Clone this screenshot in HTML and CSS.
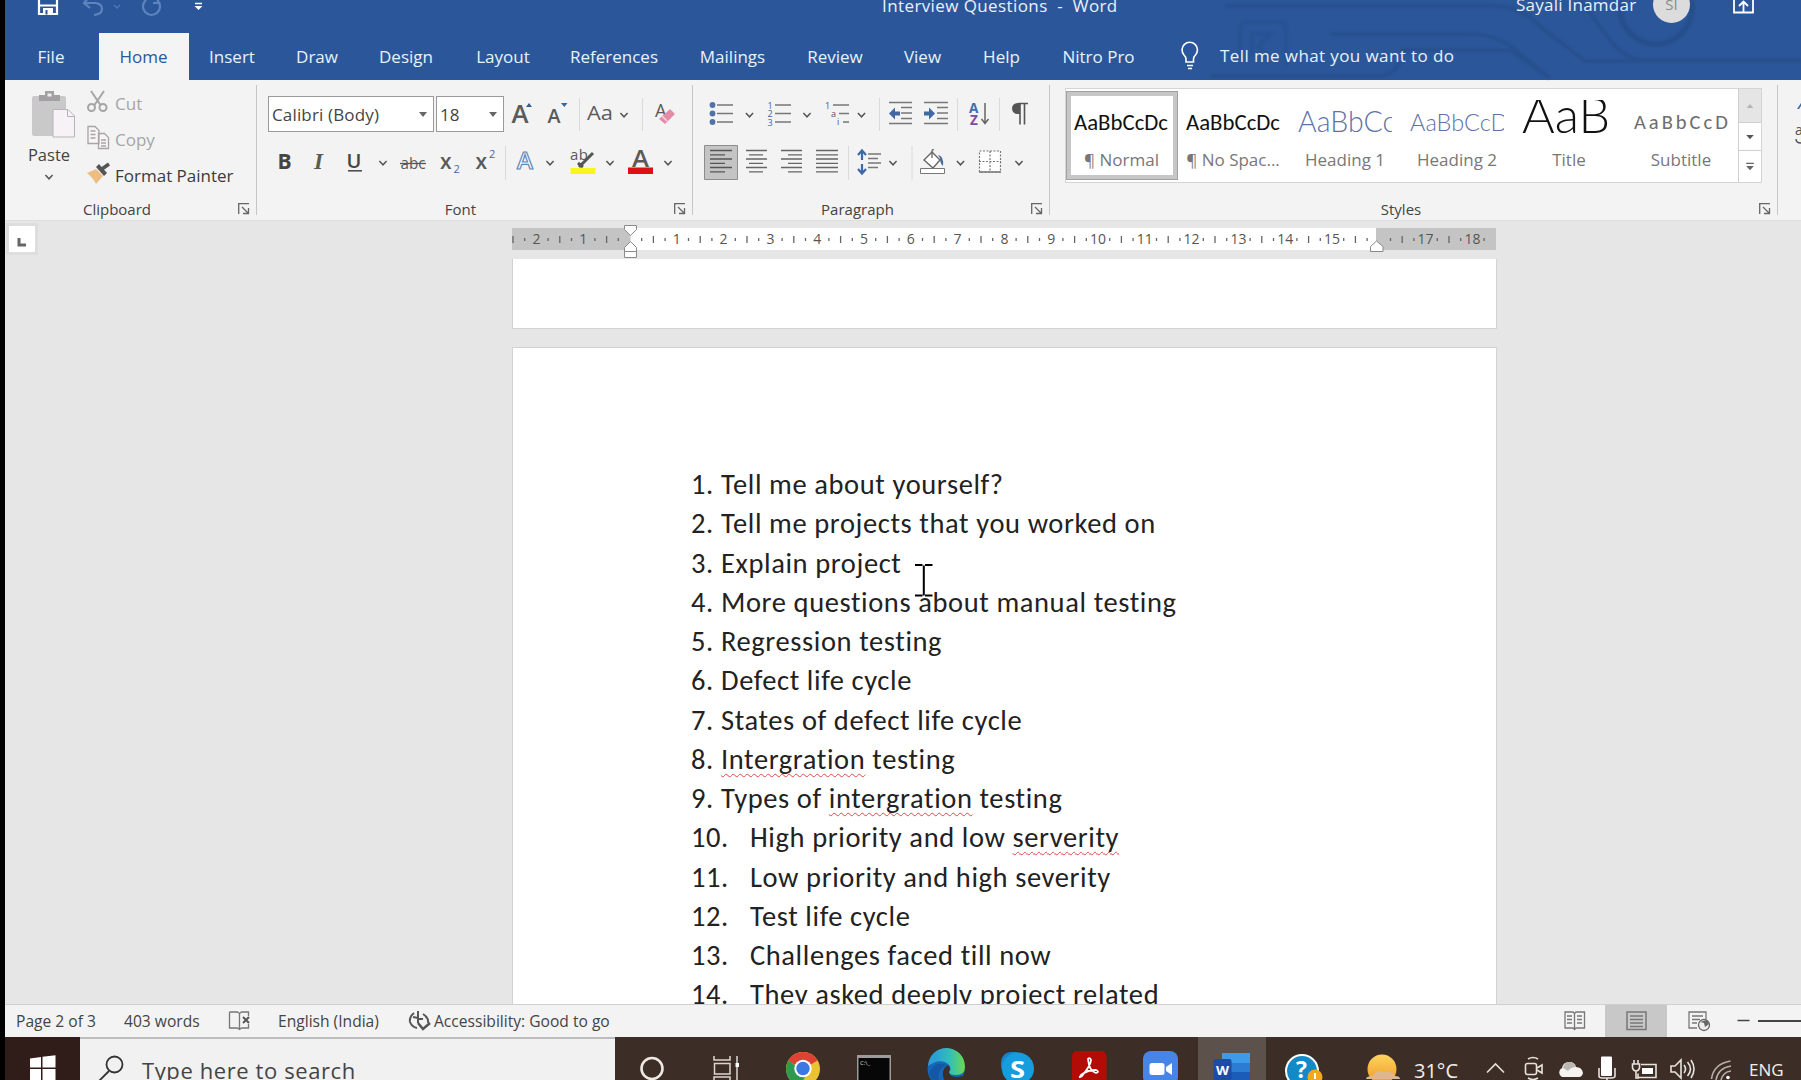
FILE: index.html
```html
<!DOCTYPE html>
<html lang="en">
<head>
<meta charset="utf-8">
<title>Interview Questions - Word</title>
<link rel="stylesheet" href="styles.css">
</head>
<body>
<svg class="defs" aria-hidden="true">
  <defs>
    <path id="chev" d="M-3.6-2L0 1.8 3.6-2" fill="none" stroke="#555" stroke-width="1.5"/>
    <path id="launch" d="M.7 11V.7H11M4 4l6 6M10.5 5v5.500H5" fill="none" stroke="#666" stroke-width="1.300"/>
    <path id="sep" d="M0 98v33" stroke="#dadada"/>
    <path id="sep2" d="M0 146v34" stroke="#dadada"/>
  </defs>
</svg>
<div class="app">
  <header class="top">
    <svg class="art" viewBox="1200 0 601 80" fill="none" stroke="#244b87">
      <path d="M1225 6h270q25 0 45 20l45 35h216M1330 34h140q30 0 50 20l30 24M1400 50h110l40 28M1580 0l30 40q15 20 35 20h156M1210 76h170q12 0 20-14" stroke-width="4" opacity=".6"/>
      <circle cx="1656" cy="8" r="36" stroke-width="6" opacity=".7"/>
      <path d="M1240 60V30q0-8 8-8h30q8 0 8 8v36M1252 54V34h18l-12 12 14 14" stroke-width="4" opacity=".4"/>
    </svg>
    <div class="titlebar">
      <svg viewBox="5 0 265 33" width="265" height="33">
        <path d="M39 0v14h18V0M39 5.500h18" fill="none" stroke="#fff" stroke-width="2.200"/>
        <path d="M43 8h10v7H43z" fill="#fff"/><path d="M45.500 10h2v4.500h-2z" fill="#2b579a"/>
        <path d="M84 3h12q6 1 6 6t-8 6M89-3l-5 6 6 5" fill="none" stroke="#5e84bd" stroke-width="2.200"/>
        <path d="M114 5l3 3 3-3" fill="none" stroke="#4d75b0" stroke-width="1.500"/>
        <path d="M146 0a8.500 8.500 0 1 0 11 0M158-2v5h-5" fill="none" stroke="#5e84bd" stroke-width="2.200"/>
        <path d="M195 3.500h7" stroke="#fff" stroke-width="1.500"/><path d="M194.500 6h8l-4 4z" fill="#fff"/>
      </svg>
      <div class="doc-title">Interview Questions&nbsp; -&nbsp; Word</div>
      <div class="user">Sayali Inamdar</div>
      <div class="avatar">SI</div>
      <svg class="share" viewBox="1725 0 40 33" width="40" height="33"><path d="M1733 0v12.500h19V0M1742.500 12V2M1738 6l4.500-4.500L1747 6" fill="none" stroke="#fff" stroke-width="1.800"/></svg>
    </div>
    <nav class="tabs">
      <span class="t-file">File</span><span class="t-home">Home</span><span class="t-insert">Insert</span><span class="t-draw">Draw</span><span class="t-design">Design</span><span class="t-layout">Layout</span><span class="t-ref">References</span><span class="t-mail">Mailings</span><span class="t-review">Review</span><span class="t-view">View</span><span class="t-help">Help</span><span class="t-nitro">Nitro Pro</span>
      <svg viewBox="1175 33 30 47" width="30" height="47" fill="none" stroke="#fff" stroke-width="1.600"><path d="M1186 62v-3q0-2-2-4a7.700 7.700 0 1 1 11.500 0q-2 2-2 4v3zM1187 65.500h6M1188 68.500h4"/></svg>
      <span class="tell">Tell me what you want to do</span>
    </nav>
  </header>

  <section class="ribbon">
    <div class="group clip">
      <div class="clip-body">
        <div class="paste">
          <svg viewBox="20 86 58 58" width="58" height="58">
            <rect x="32" y="96" width="34" height="40" rx="2" fill="#c9c9c9"/><path d="M39 95h6v-4h9v4h6v6H39z" fill="#a2a0a2"/><path d="M47.500 93.500h4v3h-4z" fill="#eee"/>
            <path d="M53 109.500h15l6.500 6.500v21H53z" fill="#f7f2f6" stroke="#b9b2b8"/><path d="M67.500 110v6.500H74" fill="none" stroke="#b9b2b8"/>
          </svg>
          <span>Paste</span>
          <svg viewBox="39 168 20 16" width="20" height="16"><use href="#chev" x="49" y="177"/></svg>
        </div>
        <div class="clip-list">
          <div class="cmd off"><svg viewBox="84 86 32 36" width="32" height="36" fill="none" stroke="#a5a5a5" stroke-width="2"><path d="M91 91l9.500 14M104 91l-9.500 14"/><circle cx="91.500" cy="107.500" r="3.500"/><circle cx="103" cy="107.500" r="3.500"/></svg><span class="c-cut">Cut</span></div>
          <div class="cmd off"><svg viewBox="84 122 32 36" width="32" height="36" fill="#f6f4f5" stroke="#a9a4a7" stroke-width="1.300"><path d="M88 126.500h7l4 4v13H88zM98.500 133.500h6l4 4v11h-10z"/><path d="M90.500 131h5M90.500 134.500h5M90.500 138h5M101 140h5M101 143h5M101 146h5"/></svg><span class="c-copy">Copy</span></div>
          <div class="cmd"><svg viewBox="84 158 32 36" width="32" height="36"><path d="M87 173l9-4 7 7-7 8q-2-5-9-11z" fill="#edbd82"/><path d="M96 167l3-3 8 9-3 3z" fill="#555"/><path d="M102 169l7-5" stroke="#555" stroke-width="3.500"/></svg><span class="c-format">Format Painter</span></div>
        </div>
      </div>
      <div class="foot"><span>Clipboard</span></div>
      <svg class="launcher" viewBox="0 0 12 12"><use href="#launch"/></svg>
    </div>

    <div class="group font">
      <div class="row r1">
        <div class="combo name"><span>Calibri (Body)</span><i></i></div>
        <div class="combo size"><span>18</span><i></i></div>
        <svg viewBox="504 92 36 44"><text x="511.500" y="122.500" font-size="25" font-weight="600" textLength="17" lengthAdjust="spacingAndGlyphs" class="gl">A</text><path d="M526 107l3-4 3 4z" fill="#3c5a86"/></svg>
        <svg viewBox="540 92 35 44"><text x="547.500" y="122.500" font-size="20" font-weight="600" textLength="13" lengthAdjust="spacingAndGlyphs" class="gl">A</text><path d="M561 103h6.500l-3.200 4z" fill="#2b6aa8"/></svg>
        <svg viewBox="575 92 10 44"><use href="#sep" x="579.500"/></svg>
        <svg viewBox="585 92 50 44"><text x="587" y="119.500" font-size="20.500" textLength="26" lengthAdjust="spacingAndGlyphs" class="gl">Aa</text><use href="#chev" x="624" y="115"/></svg>
        <svg viewBox="635 92 12 44"><use href="#sep" x="642.500"/></svg>
        <svg viewBox="647 92 42 44"><text x="655" y="117" font-size="18" class="gl">A</text><path d="M659 119l11-10 5 5-10 10z" fill="#e58ba6"/><path d="M662 116l5 5" stroke="#f8d6e0" stroke-width="1.500"/></svg>
      </div>
      <div class="row r2">
        <svg viewBox="268 136 32 48"><text x="277.500" y="168.500" font-size="21" font-weight="700" class="gl dk">B</text></svg>
        <svg viewBox="300 136 37 48"><text x="314" y="168.500" font-size="23" font-weight="700" font-style="italic" class="gl serif">I</text></svg>
        <svg viewBox="337 136 58 48"><text x="346.500" y="167.500" font-size="20" font-weight="600" class="gl dk">U</text><path d="M348 170.800h14" stroke="#444" stroke-width="1.500"/><use href="#chev" x="383" y="163"/></svg>
        <svg viewBox="395 136 37 48"><text x="400.500" y="169" font-size="17" class="gl" textLength="25" lengthAdjust="spacingAndGlyphs">abc</text><path d="M400 163.500h26" stroke="#555" stroke-width="1.300"/></svg>
        <svg viewBox="432 136 36 48"><text x="440" y="168.500" font-size="21" font-weight="600" class="gl">x</text><text x="453.500" y="172.500" font-size="11" class="gl bl">2</text></svg>
        <svg viewBox="468 136 32 48"><text x="475.500" y="168.500" font-size="21" font-weight="600" class="gl">x</text><text x="489" y="158" font-size="11" class="gl bl">2</text></svg>
        <svg viewBox="500 136 10 48"><use href="#sep2" x="505.500"/></svg>
        <svg viewBox="510 136 52 48"><text x="517" y="169" font-size="24" font-weight="600" fill="#f8fbff" stroke="#5f86bb" stroke-width="1.200">A</text><use href="#chev" x="550" y="163"/></svg>
        <svg viewBox="562 136 60 48"><text x="570" y="160" font-size="15" class="gl" textLength="18">ab</text><path d="M593 153l-14 14M578 163l5 4" stroke="#555" stroke-width="3"/><path d="M570.500 168h25v6h-25z" fill="#f8f71c"/><use href="#chev" x="610" y="163"/></svg>
        <svg viewBox="622 136 60 48"><text x="632" y="166.500" font-size="23" font-weight="600" textLength="17" lengthAdjust="spacingAndGlyphs" class="gl">A</text><path d="M628 167.500h25v6.500h-25z" fill="#dc1118"/><use href="#chev" x="668" y="163"/></svg>
      </div>
      <div class="foot"><span>Font</span></div>
      <svg class="launcher" viewBox="0 0 12 12"><use href="#launch"/></svg>
    </div>

    <div class="group para">
      <div class="row r1">
        <svg viewBox="704 92 56 44"><path d="M717 105h16M717 113.500h16M717 122h16" stroke="#777" stroke-width="1.500"/><g fill="#4f72a8"><circle cx="712.500" cy="105" r="2.900"/><circle cx="712.500" cy="113.500" r="2.900"/><circle cx="712.500" cy="122" r="2.900"/></g><use href="#chev" x="749.500" y="115"/></svg>
        <svg viewBox="760 92 58 44"><path d="M775 105h16M775 113.500h16M775 122h16" stroke="#777" stroke-width="1.500"/><g font-size="9" class="bl"><text x="767.500" y="108.500">1</text><text x="767.500" y="117">2</text><text x="767.500" y="125.500">3</text></g><use href="#chev" x="807" y="115"/></svg>
        <svg viewBox="818 92 56 44"><path d="M833 105h16M839 113.500h10M843 122h6" stroke="#777" stroke-width="1.500"/><g font-size="9" fill="#555"><text x="825" y="109">1</text><text x="831" y="117">a</text><text x="837" y="125">i</text></g><use href="#chev" x="861.500" y="115"/></svg>
        <svg viewBox="874 92 10 44"><use href="#sep" x="879.500"/></svg>
        <svg viewBox="884 92 34 44"><path d="M889 102.500h23M901 107.500h11M901 113h11M901 118.500h11M889 123.500h23" stroke="#777" stroke-width="1.500"/><path d="M889 113.500l6-6v4h5v4h-5v4z" fill="#4069a4"/></svg>
        <svg viewBox="918 92 34 44"><path d="M924 102.500h24M937 107.500h11M937 113h11M937 118.500h11M924 123.500h24" stroke="#777" stroke-width="1.500"/><path d="M935 113.500l-6-6v4h-5v4h5v4z" fill="#4069a4"/></svg>
        <svg viewBox="952 92 10 44"><use href="#sep" x="957.500"/></svg>
        <svg viewBox="962 92 34 44"><text x="969" y="112.500" font-size="13.500" font-weight="700" fill="#3f6db0">A</text><text x="970" y="125" font-size="13.500" font-weight="700" fill="#7d4aa8">Z</text><path d="M985 103v20M981.500 119l3.500 4.500 3.500-4.500" fill="none" stroke="#666" stroke-width="1.500"/></svg>
        <svg viewBox="996 92 8 44"><use href="#sep" x="999.500"/></svg>
        <svg viewBox="1004 92 40 44"><path d="M1018.500 103.500h9.500M1020 103.500v21M1024.500 103.500v21" stroke="#555" stroke-width="1.600"/><path d="M1020 103v11h-2.500a5.500 5.500 0 0 1 0-11z" fill="#555"/></svg>
      </div>
      <div class="row r2">
        <svg viewBox="704 136 35 48"><path d="M704.500 145.500h33v34h-33z" fill="#c4c4c4" stroke="#8d8d8d"/><path d="M710 150.500h22M710 154.800h15M710 159h22M710 163.300h15M710 167.500h22M710 171.800h15" stroke="#555" stroke-width="1.300"/></svg>
        <svg viewBox="739 136 35 48"><path d="M746 150.500h21M749 154.800h14M746 159h21M749 163.300h14M746 167.500h21M749 171.800h14" stroke="#666" stroke-width="1.300"/></svg>
        <svg viewBox="774 136 35 48"><path d="M781 150.500h21M788 154.800h14M781 159h21M788 163.300h14M781 167.500h21M788 171.800h14" stroke="#666" stroke-width="1.300"/></svg>
        <svg viewBox="809 136 35 48"><path d="M816 150.500h22M816 154.800h22M816 159h22M816 163.300h22M816 167.500h22M816 171.800h22" stroke="#666" stroke-width="1.300"/></svg>
        <svg viewBox="844 136 8 48"><use href="#sep2" x="848.500"/></svg>
        <svg viewBox="852 136 55 48"><path d="M862 152v8M862 164v8M858 155l4-4.500 4 4.500M858 169l4 4.500 4-4.500" fill="none" stroke="#4069a4" stroke-width="2.200"/><path d="M868 154h13M868 158.500h10M868 163h13M868 167.500h10" stroke="#777" stroke-width="1.300"/><use href="#chev" x="893" y="163"/></svg>
        <svg viewBox="907 136 8 48"><use href="#sep2" x="912"/></svg>
        <svg viewBox="915 136 58 48"><path d="M924 160l8-8 8 8-7 8z" fill="#fff" stroke="#666" stroke-width="1.400"/><path d="M932 158v-7q0-2 2-1" fill="none" stroke="#666" stroke-width="1.300"/><path d="M938 155q6 1 5 11-3-3-3-8z" fill="#46699c"/><path d="M920.500 168.500h24v5h-24z" fill="#fff" stroke="#777"/><use href="#chev" x="960.500" y="163"/></svg>
        <svg viewBox="973 136 60 48"><path d="M979.500 151h21v21h-21zM990 151v21M979 161.500h22" fill="#fff" stroke="#777" stroke-width="1.200" stroke-dasharray="2 1.500"/><path d="M979 172h22" stroke="#777" stroke-width="1.500"/><use href="#chev" x="1019" y="163"/></svg>
      </div>
      <div class="foot"><span>Paragraph</span></div>
      <svg class="launcher" viewBox="0 0 12 12"><use href="#launch"/></svg>
    </div>

    <div class="group styles">
      <div class="gallery">
        <div class="style sel"><b class="s-normal">AaBbCcDc</b><span>¶ Normal</span></div>
        <div class="style"><b class="s-normal">AaBbCcDc</b><span>¶ No Spac...</span></div>
        <div class="style"><b class="s-h1">AaBbCc</b><span>Heading 1</span></div>
        <div class="style"><b class="s-h2">AaBbCcD</b><span>Heading 2</span></div>
        <div class="style"><b class="s-title">AaB</b><span>Title</span></div>
        <div class="style"><b class="s-sub">AaBbCcD</b><span>Subtitle</span></div>
        <div class="scroll">
          <svg class="up" viewBox="0 0 23 33"><path d="M8 19h7l-3.500-4z" fill="#b5b5b5"/></svg>
          <svg class="down" viewBox="0 0 23 29"><path d="M7.500 13h8l-4 4.500z" fill="#555"/></svg>
          <svg class="more" viewBox="0 0 23 30"><path d="M7.500 11h8v1.500h-8zM7.500 14.500h8l-4 4.500z" fill="#666"/></svg>
        </div>
      </div>
      <div class="foot"><span>Styles</span></div>
      <svg class="launcher" viewBox="0 0 12 12"><use href="#launch"/></svg>
    </div>
    <div class="group rest"><svg viewBox="1778 92 23 60" width="23" height="60"><path d="M1797 109l4-6v3l-2 3z" fill="#4069a4"/><text x="1795" y="135" font-size="14" fill="#555">a</text><path d="M1796 139q0 4 5 4" fill="none" stroke="#555" stroke-width="1.500"/></svg></div>
  </section>

  <main class="canvas">
    <div class="ruler-row">
      <div class="tabsel"><svg viewBox="0 0 26 26" width="26" height="26"><path d="M10 12v7h7" fill="none" stroke="#666" stroke-width="3"/></svg></div>
      <svg class="ruler" id="ruler" viewBox="512 221 984 38" width="984" height="38">
        <path d="M512 228h984v22H512z" fill="#c4c4c4"/><path d="M630.500 228H1376v22H630.500z" fill="#fff"/>
        <g id="marks"></g>
        <g fill="#fff" stroke="#8a8a8a"><path d="M624.500 225.500h12v4l-6 6-6-6zM624.500 251.500v-4l6-6 6 6v4zM624.500 251.500h12v6h-12zM1370.500 251.500v-5l6-5.500 6.500 5.500v5z"/></g>
      </svg>
    </div>
    <div class="page prev"></div>
    <div class="page cur">
      <ol>
        <li><i>1.</i>Tell me about yourself?</li>
        <li><i>2.</i>Tell me projects that you worked on</li>
        <li><i>3.</i>Explain project</li>
        <li><i>4.</i>More questions about manual testing</li>
        <li><i>5.</i>Regression testing</li>
        <li><i>6.</i>Defect life cycle</li>
        <li><i>7.</i>States of defect life cycle</li>
        <li><i>8.</i><u>Intergration</u> testing</li>
        <li><i>9.</i>Types of <u>intergration</u> testing</li>
        <li class="wide"><i>10.</i>High priority and low <u>serverity</u></li>
        <li class="wide"><i>11.</i>Low priority and high severity</li>
        <li class="wide"><i>12.</i>Test life cycle</li>
        <li class="wide"><i>13.</i>Challenges faced till now</li>
        <li class="wide"><i>14.</i>They asked deeply project related</li>
      </ol>
      <svg class="ibeam" viewBox="0 0 18 33" width="18" height="33"><path d="M0 1h7.500M10 1h7.500M8.800 1.500v30M0 31.500h7.500M10 31.500h7.500" stroke="#000" stroke-width="2"/></svg>
    </div>
  </main>

  <div class="status">
    <span class="st-page">Page 2 of 3</span><span class="st-words">403 words</span>
    <svg viewBox="222 1005 50 32" width="50" height="32" fill="none" stroke="#777" stroke-width="1.300"><path d="M229.500 1012h8l2 1.500 2-1.500h7v4M239.500 1013v16M229.500 1012v16h8l2 1.500 2-1.500h7v-4"/><path d="M243 1017l6 6M249 1017l-6 6" stroke="#555" stroke-width="2"/></svg>
    <span class="st-lang">English (India)</span>
    <svg viewBox="403 1005 30 32" width="30" height="32" fill="none" stroke="#555" stroke-width="2"><path d="M414 1013q-5 4-4 9 2 5 7 6M423 1014q6 4 5 9M418 1011v12M413 1017l10 2"/><path d="M418 1023l5 6 7-6" stroke-width="2.500"/></svg>
    <span class="st-acc">Accessibility: Good to go</span>
    <svg viewBox="1550 1005 55 32" width="55" height="32" fill="none" stroke="#777" stroke-width="1.300"><path d="M1565 1012h8l1.500 1.500 1.500-1.500h8.500v16h-8.500l-1.500 1.500-1.500-1.500h-8zM1574.500 1013v16M1567 1016h5M1567 1019.500h5M1567 1023h5M1577 1016h5M1577 1019.500h5M1577 1023h5"/></svg>
    <svg class="on" viewBox="1605 1005 62 32" width="62" height="32" fill="none" stroke="#777" stroke-width="1.500"><path d="M1627 1012h19v17.500h-19zM1630 1016h13M1630 1019.500h13M1630 1023h13M1630 1026.500h13"/></svg>
    <svg viewBox="1667 1005 134 32" width="134" height="32" fill="none" stroke="#777" stroke-width="1.300"><path d="M1697 1028h-8v-16h17v7M1692 1016h11M1692 1019.500h8M1692 1023h5"/><circle cx="1704" cy="1025" r="5.500" fill="#eee" stroke="#666"/><path d="M1700 1022l4 1 1 4 4-3-2-4z" fill="#666" stroke="none"/><path d="M1737.500 1020.500h12" stroke="#444" stroke-width="1.500"/><path d="M1758 1021h43" stroke="#444" stroke-width="2"/></svg>
  </div>

  <footer class="taskbar">
    <div class="start"><svg viewBox="5 1037 75 43" width="75" height="43"><path d="M30 1058.500l11-1.500v10.500H30zM42.500 1056.800l13-1.500v12.200h-13zM30 1069h11v11H30zM42.500 1069h13v11h-13z" fill="#fff"/></svg></div>
    <div class="search"><svg viewBox="80 1039 62 41" width="62" height="41" fill="none" stroke="#333" stroke-width="1.800"><circle cx="114.500" cy="1064.500" r="8"/><path d="M109 1071l-10 10"/></svg><span>Type here to search</span></div>
    <svg viewBox="615 1037 75 43" width="75" height="43"><ellipse cx="652" cy="1068.500" rx="10.500" ry="10.500" fill="none" stroke="#eee8e2" stroke-width="2.600"/></svg>
    <svg viewBox="690 1037 75 43" width="75" height="43" fill="none" stroke="#ddd6cf" stroke-width="1.500"><path d="M714 1056v4h16v-4M714.500 1063.500h15.500v10.500h-15.500zM714 1080v-3h16v3M737 1056v24"/><path d="M735.500 1063h3.500v4h-3.500z" fill="#fff" stroke="none"/></svg>
    <svg viewBox="765 1037 75 43" width="75" height="43"><circle cx="803" cy="1069" r="17" fill="#eac333"/><path d="M803 1069L788.300 1060.500a17 17 0 0 1 29.400 0z" fill="#dd4335"/><path d="M817.700 1060.500H803l-9 4-5.700-4z" fill="#dd4335"/><path d="M788.300 1060.500A17 17 0 0 0 800 1085.700l7-12z" fill="#2d9a50"/><circle cx="803" cy="1068.500" r="8.700" fill="#fff"/><circle cx="803" cy="1068.500" r="6.700" fill="#3b78e0"/></svg>
    <svg viewBox="840 1037 70 43" width="70" height="43"><path d="M857 1055h34v25h-34z" fill="#9b9b9b"/><path d="M858.500 1058h31v22h-31z" fill="#070707"/><text x="860" y="1065" font-size="6" fill="#ddd">C:\_</text></svg>
    <svg viewBox="910 1037 72 43" width="72" height="43"><defs><linearGradient id="eg"><stop offset=".2" stop-color="#2a9fd8"/><stop offset=".6" stop-color="#35bfb7"/><stop offset="1" stop-color="#69d94e"/></linearGradient></defs><circle cx="946" cy="1069" r="18.500" fill="#1766b8"/><path d="M928 1066a18.500 18.500 0 0 1 37 1q0 8-9 8-7 0-7-3 3-3 0-7-8-8-21 1z" fill="url(#eg)"/><path d="M944 1080q-4-10 4-15 3 3 1 7 0 5 9 5l8-2v5z" fill="#3c3026"/><path d="M929 1074q5-14 17-9-9 4-7 15h-6z" fill="#1258a6"/></svg>
    <svg viewBox="982 1037 72 43" width="72" height="43"><rect x="1001" y="1052" width="24" height="24" rx="10" fill="#1686cc"/><circle cx="1018" cy="1068.500" r="16" fill="#159ddd"/><text x="1010" y="1078" font-size="24" font-weight="700" fill="#fff" textLength="15" lengthAdjust="spacingAndGlyphs">S</text></svg>
    <svg viewBox="1054 1037 72 43" width="72" height="43"><rect x="1072" y="1051" width="34.500" height="34" rx="5" fill="#b30c07"/><path d="M1088 1059q2-2 3 1 0 5-9 16-4 3-1-1 6-5 15-5 4 2 0 3-7-2-8-14z" fill="none" stroke="#fff" stroke-width="1.800"/></svg>
    <svg viewBox="1126 1037 72 43" width="72" height="43"><rect x="1143" y="1051" width="35" height="34" rx="8" fill="#4784e8"/><rect x="1149.500" y="1063" width="15" height="12" rx="2.500" fill="#fff"/><path d="M1166 1067l6-4v12l-6-4z" fill="#fff"/></svg>
    <svg class="active" viewBox="1198 1037 68 43" width="68" height="43"><path d="M1222 1053h28v10h-28z" fill="#3f9be8"/><path d="M1222 1063h28v9h-28z" fill="#2b7cd3"/><path d="M1222 1072h28v8h-28z" fill="#1b5cb8"/><rect x="1213.500" y="1059" width="18" height="21" rx="2" fill="#1c4ca5"/><text x="1216" y="1074.500" font-size="12" font-weight="700" fill="#fff" textLength="13" lengthAdjust="spacingAndGlyphs">W</text></svg>
    <svg viewBox="1266 1037 84 43" width="84" height="43"><circle cx="1302" cy="1071" r="16" fill="#1489c8" stroke="#fff" stroke-width="2"/><text x="1296" y="1078" font-size="23" font-weight="700" fill="#fff">?</text><circle cx="1315" cy="1077" r="7.500" fill="#f0a81c"/><path d="M1314 1073h2v6h-2z" fill="#fff"/></svg>
    <svg viewBox="1350 1037 60 43" width="60" height="43"><defs><linearGradient id="sun" x2="0" y2="1"><stop stop-color="#fdd35d"/><stop offset="1" stop-color="#f09a2a"/></linearGradient></defs><circle cx="1382" cy="1069" r="14.500" fill="url(#sun)"/><path d="M1366 1079q0-3 7-3 4-7 11-4 8-1 11 4 5 0 5 3z" fill="#dfb693"/></svg>
    <span class="temp">31°C</span>
    <svg viewBox="1465 1037 280 43" width="280" height="43" fill="none" stroke="#e8e2dc" stroke-width="1.600">
      <path d="M1487 1072.500l8.500-8.500 8.500 8.500"/>
      <rect x="1525.500" y="1063.500" width="11" height="11" rx="2"/><path d="M1537 1068l5-3v8l-5-3M1528 1059q5-3 10 0M1528 1078q5 3 10 0"/>
      <path d="M1562 1077a5 5 0 0 1 0-9q1-6 7-6 6 0 7 5 6 0 7 6-1 4-4 4z" fill="#f5f2ef" stroke="none"/><path d="M1563 1068q1-6 6-6 5 0 7 5-5 0-8 4z" fill="#bdb7b2" stroke="none"/>
      <rect x="1601" y="1056.500" width="11" height="19.500" rx="1" fill="#fff" stroke="none"/><path d="M1599 1068v8q0 2 3 2h9q4 0 4-2v-8M1607 1078v2"/>
      <path d="M1641 1064.500h15v13h-18v-4M1632.500 1064h7v4q-1 3-3.500 3t-3.500-3zM1634 1060v4M1638 1060v4M1636 1071v7h3"/><path d="M1642 1068h11v6h-11z" fill="#fff" stroke="none"/>
      <path d="M1671 1066h4l6-6v18l-6-6h-4zM1684 1065q3 4 0 8M1687.500 1062q6 7 0 14M1691 1060q6 9 0 18"/>
      <path d="M1711.500 1079q2-15 19-18M1716 1080q2-12 15-14M1721 1080q2-8 10-9" stroke="#b6afa8"/><circle cx="1728" cy="1077.500" r="1.800" fill="#fff" stroke="none"/>
    </svg>
    <span class="eng">ENG</span>
  </footer>
</div>
<script src="ruler.js"></script>
</body>
</html>
```
FILE: styles.css
```css
* { box-sizing: border-box; }
body { margin: 0; background: #000; overflow: hidden; font-family: "Open Sans", "Noto Sans", sans-serif; color: #444; }
svg { display: block; flex: none; }
.defs { position: absolute; width: 0; height: 0; }
.app { height: 1080px; padding-left: 5px; display: flex; flex-direction: column; overflow: hidden; }

/* Title bar and tabs */
.top { position: relative; height: 80px; flex: none; background: #2b579a; color: #e9f1fb; }
.art { position: absolute; right: 0; top: 0; width: 601px; height: 80px; filter: blur(1px); }
.titlebar, .tabs { position: relative; display: flex; white-space: nowrap; }
.titlebar { height: 33px; font-size: 17px; line-height: 24px; overflow: hidden; }
.titlebar > * { flex: none; }
.doc-title { margin-left: 612px; margin-top: -6px; width: 634px; letter-spacing: .4px; }
.user { width: 137px; margin-top: -7px; letter-spacing: .25px; }
.avatar { width: 37px; height: 37px; margin-top: -14px; border-radius: 50%; background: #dcdcdc; color: #8b8b8b; font-size: 15px; line-height: 37px; text-align: center; }
.share { margin-left: 36px; }
.tabs { height: 47px; font-size: 17px; line-height: 47px; }
.tabs span { flex: none; text-align: center; }
.tabs .t-file { width: 94px; padding-right: 2px; }
.tabs .t-home { width: 90px; padding-right: 1px; background: #f4f4f5; color: #2b579a; }
.t-insert { width: 86px; }
.t-draw { width: 84px; }
.t-design { width: 94px; }
.t-layout { width: 100px; }
.t-ref { width: 122px; }
.t-mail { width: 115px; }
.t-review { width: 90px; }
.t-view { width: 85px; }
.t-help { width: 73px; }
.t-nitro { width: 137px; padding-right: 16px; }
.tabs .tell { margin-left: 15px; line-height: 45px; letter-spacing: .4px; }

/* Ribbon */
.ribbon { display: flex; flex: none; height: 141px; background: #f3f3f3; border-bottom: 1px solid #dedede; }
.group { position: relative; flex: none; height: 140px; padding-top: 12px; }
.group::after { content: ""; position: absolute; right: 0; top: 5px; width: 1px; height: 130px; background: #c6c6c6; }
.clip { width: 252px; padding-top: 6px; }
.font { width: 436px; padding-left: 11px; }
.para { width: 357px; padding-left: 11px; }
.styles { width: 728px; padding: 8px 16px 0 15px; }
.rest { width: 23px; }
.rest::after { display: none; }
.row { display: flex; align-items: center; }
.r1 > svg, .r1 { height: 44px; }
.r2 > svg, .r2 { height: 48px; }
.gl { fill: #5a5a5a; }
.dk { fill: #444; }
.bl { fill: #3f67a5; }
.serif { font-family: "Liberation Serif", serif; }
.foot { height: 37px; padding-top: 13px; font-size: 15px; line-height: 24px; text-align: center; }
.clip .foot { padding-top: 1px; padding-right: 28px; }
.font .foot { padding-right: 40px; }
.para .foot { padding-right: 39px; }
.styles .foot { padding-top: 14px; padding-right: 25px; }
.launcher { position: absolute; right: 7px; bottom: 5px; width: 12px; height: 12px; }
.clip-body { display: flex; height: 110px; }
.paste { width: 79px; display: flex; flex-direction: column; align-items: center; font-size: 16.500px; line-height: 21px; padding-left: 9px; }
.paste span { height: 24px; }
.cmd { display: flex; height: 36px; align-items: center; font-size: 17px; line-height: 34px; color: #3b3b3b; }
.cmd span { padding-bottom: 1px; margin-left: -1px; }
.off { color: #a6a6a6; }
.combo { display: flex; flex: none; height: 36px; align-items: center; justify-content: space-between; background: #fff; border: 1px solid #9a9a9a; padding: 1px 6px 0 3px; font-size: 17px; }
.combo i { border: 4px solid transparent; border-top: 5px solid #666; border-bottom: 0; }
.name { width: 166px; margin-right: 2px; }
.name span { letter-spacing: .15px; }
.size { width: 68px; }

/* Style gallery */
.gallery { display: flex; width: 697px; height: 95px; background: #fff; border: 1px solid #d4d4d4; }
.style { width: 112px; padding: 0 10px 0 8px; flex: none; font-size: 17px; text-align: center; color: #777; white-space: nowrap; }
.style b { display: block; height: 40px; margin-top: 11px; overflow: hidden; font-weight: 300; text-align: left; font-family: Lato, sans-serif; }
.style span { display: block; margin: 9px -8px 0 -8px; line-height: 22px; }
.style.sel { height: 89px; margin-top: 2px; border: 5px solid #c6c6c6; outline: 1px solid #a2a2a2; outline-offset: -1px; padding: 0 4px 0 3px; }
.style.sel b { margin-top: 4px; }
.style .s-normal { color: #111; font: 400 22.800px/45px Carlito, Lato, sans-serif; }
.style .s-h1 { color: #5f72a8; font-size: 28.500px; line-height: 43px; }
.style .s-h2 { color: #5f72a8; font-size: 23.500px; line-height: 45px; }
.style .s-title { color: #111; font-size: 50px; line-height: 29px; }
.style .s-sub { color: #6d6d6d; font: 400 20.500px/44px Carlito, Lato, sans-serif; letter-spacing: 3px; }
.scroll { width: 23px; border-left: 1px solid #cfcfcf; }
.scroll svg { width: 22px; }
.up { height: 33px; background: #e5e5e5; }
.down { height: 29px; border-bottom: 1px solid #cfcfcf; border-top: 1px solid #cfcfcf; }
.more { height: 31px; }

/* Document */
.canvas { flex: 1; min-height: 0; overflow: hidden; background: #e6e6e6; }
.ruler-row { display: flex; height: 38px; }
.tabsel { width: 26px; height: 26px; margin: 5px 477px 0 4px; background: #fff; box-shadow: 0 0 0 3px #dedede; }
.ruler text { font-size: 14px; fill: #555; text-anchor: middle; }
.page { width: 985px; margin-left: 507px; background: #fff; border: 1px solid #d2d2d2; }
.prev { height: 70px; border-top: 0; }
.cur { position: relative; height: 700px; margin-top: 18px; }
.cur ol { list-style: none; margin: 0; padding: 117px 0 0 178px; font-family: Carlito, Lato, sans-serif; font-size: 28.500px; line-height: 39.250px; letter-spacing: .6px; font-variant-ligatures: none; color: #222; white-space: nowrap; }
.cur li { display: flex; white-space: pre; }
.cur i { font-style: normal; width: 30px; flex: none; }
.cur .wide i { width: 59px; }
.cur u { text-decoration: underline wavy #e04848 1px; text-underline-offset: 4px; text-decoration-skip-ink: none; }
.ibeam { position: absolute; left: 402px; top: 216px; }

/* Status bar */
.status { display: flex; flex: none; height: 33px; border-top: 1px solid #cfcfcf; background: #f3f3f3; font-size: 15.600px; line-height: 33px; white-space: nowrap; }
.status span { flex: none; }
.st-page { margin-left: 11px; width: 108px; }
.st-words { width: 98px; }
.st-lang { width: 125px; margin-left: 6px; }
.st-acc { margin-left: 1px; width: 1116px; }
.on { background: #c8c8c8; }

/* Taskbar */
.taskbar { display: flex; flex: none; height: 43px; background: #3c2e26; overflow: hidden; white-space: nowrap; color: #f2eeea; }
.taskbar > * { flex: none; }
.start { width: 75px; background: #301c19; }
.search { display: flex; width: 535px; height: 43px; border-top: 2px solid #bdbdbd; background: #f1f1f1; color: #444; font-size: 22px; line-height: 63px; letter-spacing: .6px; }
.active { background: #5d524b; }
.temp { width: 55px; padding-left: 4px; font-size: 20px; line-height: 67px; }
.eng { width: 52px; padding-left: 4px; font-size: 17px; line-height: 65px; }
```
FILE: ruler.js
```js
// Draws the centimetre numbers, half-centimetre lines and quarter dots of the ruler.
const NS = 'http://www.w3.org/2000/svg';
const marks = document.getElementById('marks');
const ZERO = 630, CM = 46.8;
for (let q = -10; q <= 73; q++) {
  const x = ZERO + q * CM / 4;
  if (q === 0 || q === 64) continue;
  if (q % 4 === 0) {
    const t = document.createElementNS(NS, 'text');
    t.setAttribute('x', x);
    t.setAttribute('y', 244);
    t.textContent = Math.abs(q / 4);
    marks.appendChild(t);
  } else {
    const p = document.createElementNS(NS, 'path');
    p.setAttribute('d', q % 2 === 0 ? `M${x} 236v7` : `M${x} 238v3`);
    p.setAttribute('stroke', '#666');
    p.setAttribute('stroke-width', 1.3);
    marks.appendChild(p);
  }
}
```
